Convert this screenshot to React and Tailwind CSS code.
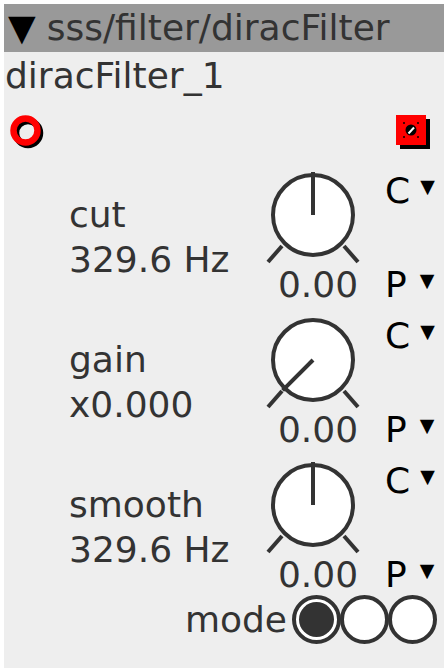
import React from "react";

const rows = [
  { label: "cut", value: "329.6 Hz", angle: 0 },
  { label: "gain", value: "x0.000", angle: -135 },
  { label: "smooth", value: "329.6 Hz", angle: 0 },
];

function Knob({ angle }) {
  // knob center in svg coords
  const cx = 51;
  const cy = 55;
  const r = 40;
  const rad = (angle * Math.PI) / 180;
  const px = cx + Math.sin(rad) * (r + 3);
  const py = cy - Math.cos(rad) * (r + 3);
  return (
    <svg width="110" height="106" viewBox="0 0 110 106">
      <line x1="20" y1="86" x2="6" y2="102" stroke="#333" strokeWidth="4" />
      <line x1="82" y1="86" x2="96" y2="102" stroke="#333" strokeWidth="4" />
      <circle cx={cx} cy={cy} r={r} fill="#fff" stroke="#333" strokeWidth="4" />
      <line x1={cx} y1={cy} x2={px} y2={py} stroke="#333" strokeWidth="4" />
    </svg>
  );
}

function InletRing() {
  return (
    <svg width="38" height="38" viewBox="0 0 38 38">
      <circle cx="18" cy="20" r="12" fill="none" stroke="#000" strokeWidth="6.5" />
      <circle cx="15.5" cy="17.5" r="12" fill="none" stroke="#f00" strokeWidth="6.5" />
    </svg>
  );
}

function OutletSquare() {
  return (
    <svg width="36" height="36" viewBox="0 0 36 36">
      <rect x="4" y="4" width="30" height="30" fill="#000" />
      <rect x="0" y="0" width="30" height="30" fill="#f00" />
      <circle cx="15" cy="15" r="5.5" fill="#000" />
      <path d="M12.5 18.5 L18 12.5" stroke="#fff" strokeWidth="2" />
      <rect x="7" y="7" width="2" height="2" fill="#400" />
      <rect x="21" y="7" width="2" height="2" fill="#400" />
      <rect x="7" y="21" width="2" height="2" fill="#400" />
      <rect x="21" y="21" width="2" height="2" fill="#400" />
    </svg>
  );
}

export default function App() {
  return (
    <div
      className="w-[448px] h-[672px] bg-white p-[4px]"
      style={{ fontFamily: "'DejaVu Sans', sans-serif" }}
    >
      <div className="flex flex-col h-[664px] bg-[#eeeeee] text-[#333] text-[36px]">
        {/* Header */}
        <div className="h-[48px] bg-[#999999] flex items-center pl-[4px] leading-[48px] whitespace-nowrap">
          <span className="text-black">▼</span>
          <span className="ml-[11px]">sss/filter/diracFilter</span>
        </div>

        <div className="h-[48px] leading-[48px] pl-[1px]">diracFilter_1</div>

        {/* Ports */}
        <div className="h-[60px] flex items-center justify-between pl-[6px] pr-[12px]">
          <div className="pt-[4px]">
            <InletRing />
          </div>
          <div className="pt-[6px]">
            <OutletSquare />
          </div>
        </div>

        {/* Knob rows */}
        {rows.map((row) => (
          <div key={row.label} className="h-[145px] flex leading-[45px]">
            <div className="w-[258px] pl-[65px] pt-[32px] whitespace-nowrap">
              <div>{row.label}</div>
              <div>{row.value}</div>
            </div>
            <div className="w-[110px] flex flex-col items-center">
              <Knob angle={row.angle} />
              <div className="leading-[38px] pl-[2px]">0.00</div>
            </div>
            <div className="flex-1 flex flex-col justify-between pl-[13px] pt-[11px] text-black leading-[40px]">
              <div className="flex items-start">
                <span>C</span>
                <span className="text-[19px] leading-[30px] ml-[10px]">▼</span>
              </div>
              <div className="flex items-start">
                <span>P</span>
                <span className="text-[19px] leading-[30px] ml-[13px]">▼</span>
              </div>
            </div>
          </div>
        ))}

        {/* Mode */}
        <div className="flex items-center justify-end pr-[7px]">
          <span className="mr-[6px] leading-[48px]">mode</span>
          <div className="flex">
            {[0, 1, 2].map((i) => (
              <div
                key={i}
                className="w-[49px] h-[49px] -ml-[1px] rounded-full border-[4px] border-[#333] bg-white flex items-center justify-center"
              >
                {i === 0 && <div className="w-[35px] h-[35px] rounded-full bg-[#333]" />}
              </div>
            ))}
          </div>
        </div>
      </div>
    </div>
  );
}
